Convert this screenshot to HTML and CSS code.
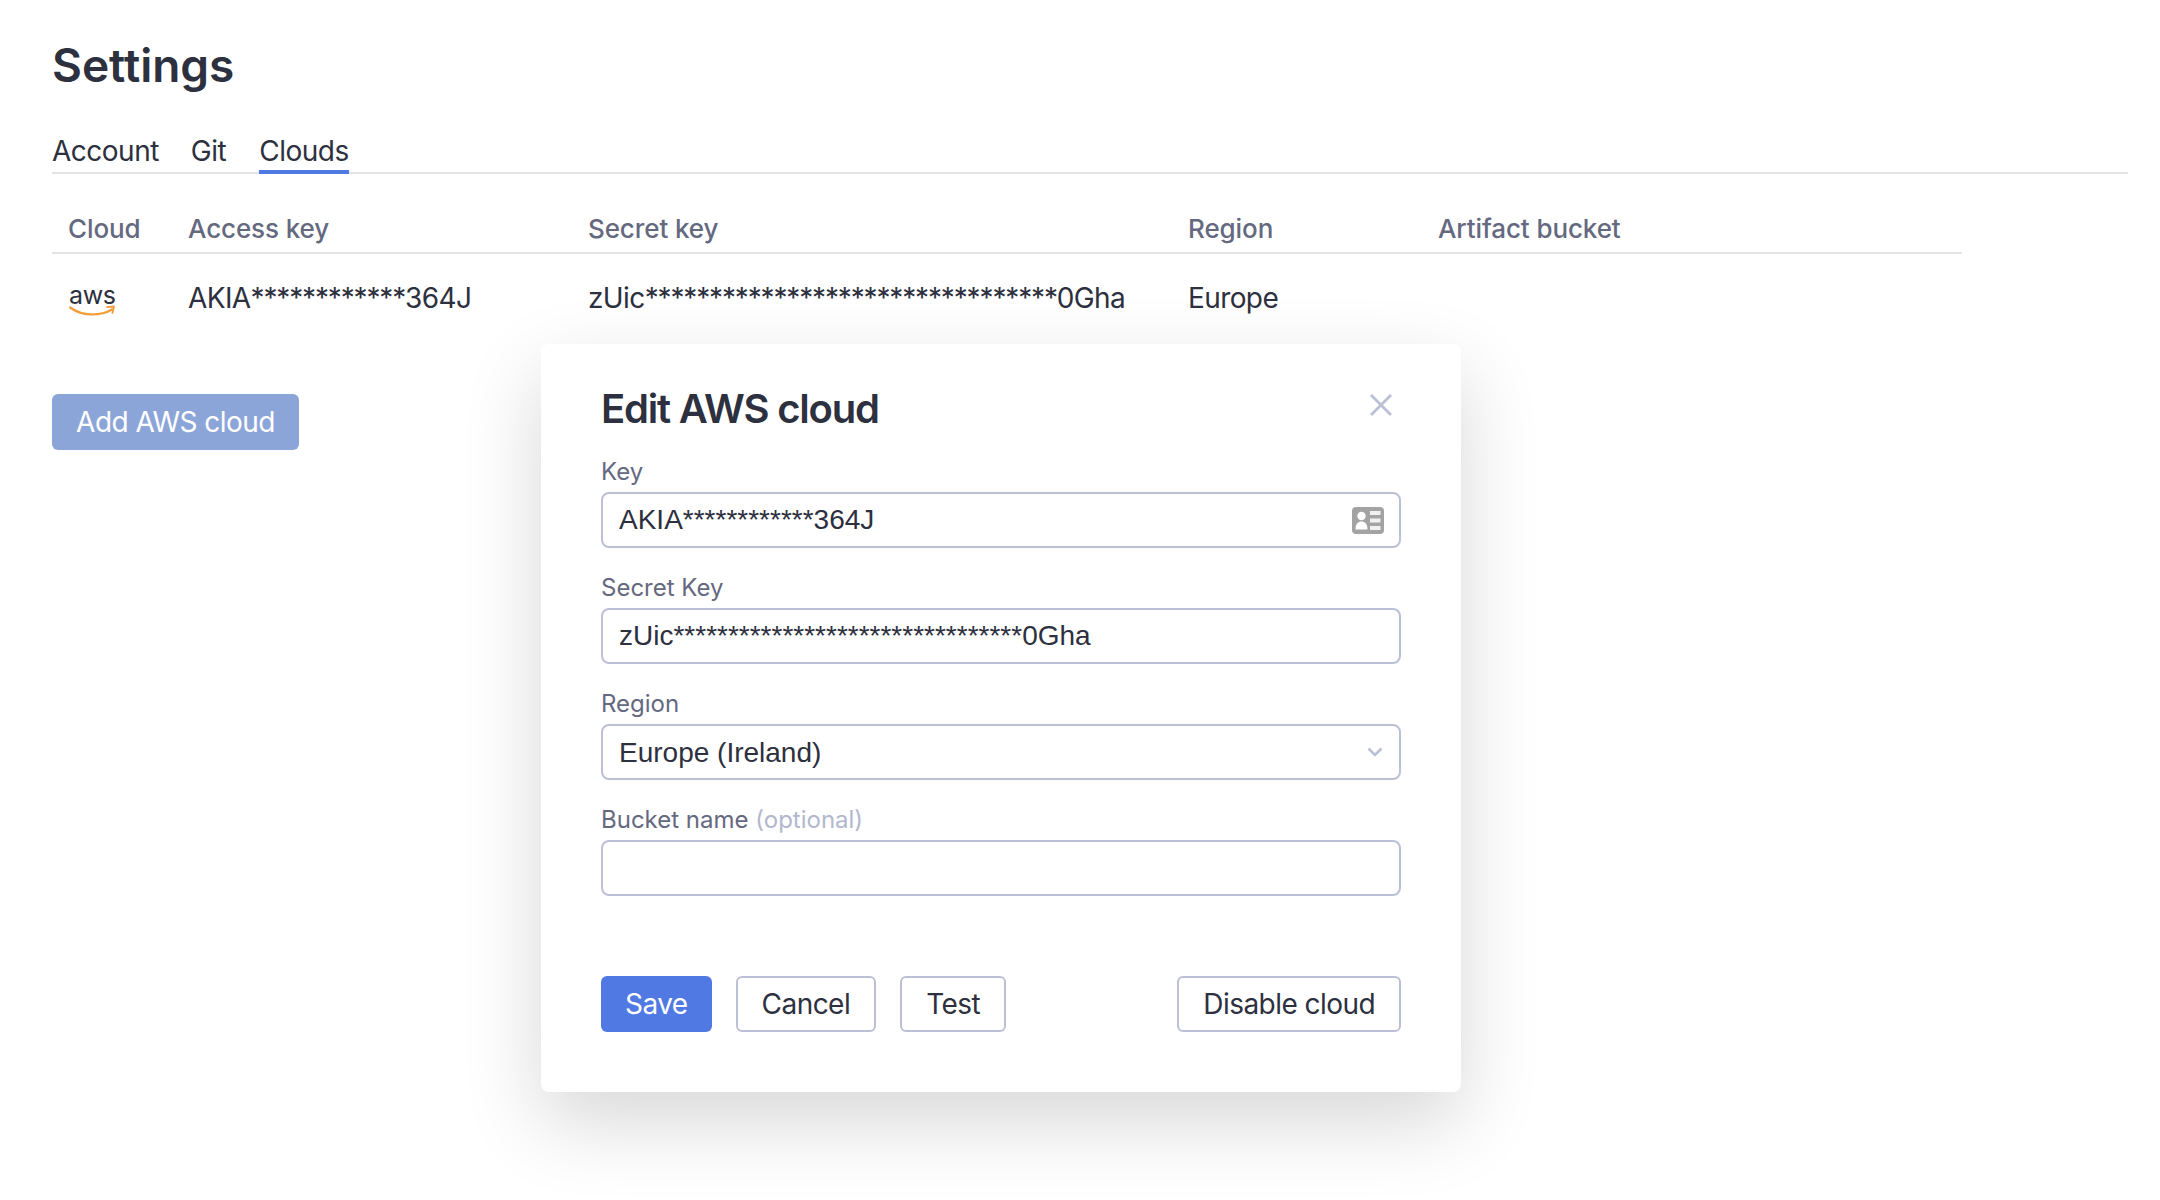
FILE: index.html
```html
<!DOCTYPE html>
<html lang="en">
<head>
    <meta charset="UTF-8">
    <title>Settings</title>
    <link rel="stylesheet" href="styles.css">
</head>
<body>
    <div class="page">
        <h1>Settings</h1>
        <nav class="tabs">
            <a class="tab">Account</a>
            <a class="tab">Git</a>
            <a class="tab active">Clouds</a>
        </nav>
        <table class="clouds">
            <colgroup>
                <col class="col-cloud">
                <col class="col-access">
                <col class="col-secret">
                <col class="col-region">
                <col>
            </colgroup>
            <thead>
                <tr>
                    <th>Cloud</th>
                    <th>Access key</th>
                    <th>Secret key</th>
                    <th>Region</th>
                    <th>Artifact bucket</th>
                </tr>
            </thead>
            <tbody>
                <tr>
                    <td>
                        <span class="aws-logo">
                            <span class="aws-word">aws</span>
                            <svg class="aws-smile" width="46" height="12" viewBox="0 0 46 12" fill="none">
                                <path d="M1 2.5C8 7.5 16 9.5 23 9.5C31 9.5 38 7.5 43 4.5" stroke="#f29d38" stroke-width="2.2" stroke-linecap="round"/>
                                <path d="M38 2.2L45 1.5L43.4 8" stroke="#f29d38" stroke-width="1.8" stroke-linecap="round" stroke-linejoin="round"/>
                            </svg>
                        </span>
                    </td>
                    <td>AKIA<span class="stars">************</span>364J</td>
                    <td>zUic<span class="stars">********************************</span>0Gha</td>
                    <td>Europe</td>
                    <td></td>
                </tr>
            </tbody>
        </table>
        <button class="btn btn-faded">Add AWS cloud</button>
    </div>

    <div class="modal">
        <div class="modal-head">
            <h2>Edit AWS cloud</h2>
            <svg class="close" width="24" height="24" viewBox="0 0 24 24" fill="none">
                <path d="M2 2L22 22M22 2L2 22" stroke="#bcc0d6" stroke-width="2.8"/>
            </svg>
        </div>
        <div class="field">
            <label>Key</label>
            <div class="control">
                <input type="text" value="AKIA************364J">
                <svg class="contact-icon" width="32" height="28" viewBox="0 0 32 28">
                    <rect width="32" height="27" rx="4" fill="#a3a3a3"/>
                    <circle cx="9.5" cy="9" r="4.2" fill="#fff"/>
                    <path d="M3.5 22.5C3.5 17 6 14.5 9.5 14.5C13 14.5 15.5 17 15.5 22.5Z" fill="#fff"/>
                    <path d="M18 4H28.5V8H18ZM18 11.5H28.5V15.5H18ZM18 19H28.5V23H18Z" fill="#fff" opacity="0.85"/>
                </svg>
            </div>
        </div>
        <div class="field">
            <label>Secret Key</label>
            <div class="control">
                <input type="text" value="zUic********************************0Gha">
            </div>
        </div>
        <div class="field">
            <label>Region</label>
            <div class="control">
                <select>
                    <option>Europe (Ireland)</option>
                </select>
                <svg class="chevron" width="16" height="10" viewBox="0 0 16 10" fill="none">
                    <path d="M1.5 1.5L8 8L14.5 1.5" stroke="#bcc0d6" stroke-width="2.6"/>
                </svg>
            </div>
        </div>
        <div class="field">
            <label>Bucket name <span class="optional">(optional)</span></label>
            <div class="control">
                <input type="text">
            </div>
        </div>
        <div class="actions">
            <button class="btn btn-primary">Save</button>
            <button class="btn btn-outline">Cancel</button>
            <button class="btn btn-outline">Test</button>
            <button class="btn btn-outline push-right">Disable cloud</button>
        </div>
    </div>
</body>
</html>
```

FILE: styles.css
```css
* {
    box-sizing: border-box;
}
body {
    font-family: Inter, 'Liberation Sans', sans-serif;
    margin: 0;
    background: #fff;
    color: #2d303e;
    min-height: 1200px;
    overflow: hidden;
}
.page {
    padding: 38px 32px 0 52px;
}
h1 {
    font-size: 46px;
    line-height: 54px;
    font-weight: 600;
    margin: 0 0 44px;
}
.tabs {
    display: flex;
    gap: 32px;
    border-bottom: 2px solid #e4e4e6;
    height: 38px;
}
.tab {
    font-size: 28px;
    line-height: 30px;
    height: 38px;
    letter-spacing: -0.5px;
}
.tab.active {
    border-bottom: 4px solid #5079e3;
    margin-left: 1px;
}
.clouds {
    width: 1910px;
    table-layout: fixed;
    border-collapse: collapse;
    margin-top: 32px;
    font-size: 28px;
    letter-spacing: -0.6px;
}
.col-cloud { width: 120px; }
.col-access { width: 400px; }
.col-secret { width: 600px; }
.col-region { width: 250px; }
.clouds th {
    font-size: 26px;
    font-weight: 500;
    line-height: 32px;
    letter-spacing: -0.1px;
    color: #646980;
    text-align: left;
    padding: 7px 16px 7px;
    border-bottom: 2px solid #e4e4e6;
}
.clouds td {
    padding: 0 16px;
    height: 88px;
    white-space: nowrap;
    overflow: visible;
}
.stars {
    letter-spacing: -1.15px;
}
.aws-logo {
    display: block;
    width: 46px;
    height: 34px;
    margin: 4px 0 0 1px;
}
.aws-word {
    display: block;
    font-size: 25px;
    line-height: 24px;
    text-align: center;
    color: #2d303e;
    letter-spacing: -0.4px;
}
.aws-smile {
    display: block;
    margin-top: -2px;
}
.btn {
    font-family: inherit;
    font-size: 28px;
    height: 56px;
    padding: 0 24px;
    border-radius: 6px;
    border: 0;
    letter-spacing: -0.55px;
}
.btn-faded {
    background: #8ca5d9;
    color: #fff;
    margin-top: 53px;
    width: 247px;
    padding: 0;
}
.btn-primary {
    background: #5079e3;
    color: #fff;
}
.btn-outline {
    background: #fff;
    color: #2d303e;
    border: 2px solid #bcc0d6;
}
.push-right {
    margin-left: auto;
}
.modal {
    position: absolute;
    left: 541px;
    top: 344px;
    width: 920px;
    height: 748px;
    padding: 40px 60px 0;
    background: #fff;
    border-radius: 8px;
    box-shadow: 0 30px 80px rgba(0, 0, 0, 0.16);
}
.modal-head {
    display: flex;
    justify-content: space-between;
    align-items: center;
    height: 50px;
    margin-bottom: 23px;
}
h2 {
    font-size: 40px;
    line-height: 50px;
    font-weight: 600;
    margin: 0;
    letter-spacing: -1.2px;
}
.close {
    margin: -8px 8px 0 0;
}
.field {
    margin-bottom: 25px;
}
label {
    display: block;
    font-size: 24px;
    line-height: 30px;
    color: #646980;
    margin-bottom: 5px;
}
.optional {
    color: #b3b7ce;
}
.control {
    position: relative;
}
input, select {
    display: block;
    width: 100%;
    height: 56px;
    padding: 0 16px;
    font-family: 'Liberation Sans', Arial, sans-serif;
    font-size: 28px;
    color: #2d303e;
    background: #fff;
    border: 2px solid #bcc0d6;
    border-radius: 8px;
    appearance: none;
}
.contact-icon {
    position: absolute;
    right: 17px;
    top: 15px;
}
.chevron {
    position: absolute;
    right: 18px;
    top: 23px;
}
.actions {
    display: flex;
    gap: 24px;
    margin-top: 80px;
}
```
